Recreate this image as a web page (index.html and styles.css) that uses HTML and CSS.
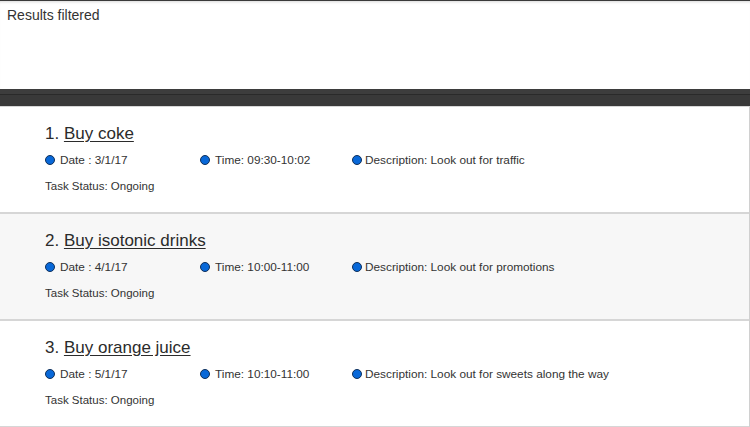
FILE: index.html
```html
<!DOCTYPE html>
<html>
<head>
<meta charset="utf-8">
<link rel="stylesheet" href="styles.css">
</head>
<body>
<div class="status">Results filtered</div>
<div class="toolbar"><div class="toolbar-top"></div></div>
<div class="list">
  <div class="card">
    <div class="title">1. <span class="name">Buy coke</span></div>
    <div class="details">
      <div class="item"><span class="dot"></span><span>Date : 3/1/17</span></div>
      <div class="item"><span class="dot"></span><span>Time: 09:30-10:02</span></div>
      <div class="item desc"><span class="dot"></span><span>Description: Look out for traffic</span></div>
    </div>
    <div class="task">Task Status: Ongoing</div>
  </div>
  <div class="card alt">
    <div class="title">2. <span class="name">Buy isotonic drinks</span></div>
    <div class="details">
      <div class="item"><span class="dot"></span><span>Date : 4/1/17</span></div>
      <div class="item"><span class="dot"></span><span>Time: 10:00-11:00</span></div>
      <div class="item desc"><span class="dot"></span><span>Description: Look out for promotions</span></div>
    </div>
    <div class="task">Task Status: Ongoing</div>
  </div>
  <div class="card">
    <div class="title">3. <span class="name">Buy orange juice</span></div>
    <div class="details">
      <div class="item"><span class="dot"></span><span>Date : 5/1/17</span></div>
      <div class="item"><span class="dot"></span><span>Time: 10:10-11:00</span></div>
      <div class="item desc"><span class="dot"></span><span>Description: Look out for sweets along the way</span></div>
    </div>
    <div class="task">Task Status: Ongoing</div>
  </div>
</div>
</body>
</html>
```
FILE: styles.css
```css
html, body {
  margin: 0;
  padding: 0;
  background: #ffffff;
  font-family: "Liberation Sans", Arial, sans-serif;
  color: #333333;
  height: 427px;
  overflow: hidden;
}
.status {
  border-top: 1px solid #3a3a3a;
  box-shadow: inset 0 3px 3px -2px #d8d8d8;
  padding: 6px 0 0 7px;
  box-sizing: border-box;
  height: 89px;
  font-size: 14px;
  line-height: 17px;
  color: #333333;
}
.toolbar {
  height: 17px;
  background: #393939;
  border-bottom: 1px solid #d6d6d6;
}
.toolbar-top {
  height: 5px;
  border-bottom: 1px solid #2a2a2a;
  background: #3d3d3d;
}
.list {
  border-right: 1px solid #d0d0d0;
}
.card {
  border-bottom: 2px solid #d6d6d6;
  padding: 16px 0 0 45px;
  box-sizing: content-box;
  height: 89px;
  background: #ffffff;
}
.card.alt {
  background: #f7f7f7;
}
.title {
  font-size: 17px;
  line-height: 21px;
  color: #2b2b2b;
}
.name {
  text-decoration: underline;
  text-underline-offset: 2px;
}
.details {
  display: grid;
  grid-template-columns: 155px 152px auto;
  margin-top: 9px;
  font-size: 11.8px;
  line-height: 14px;
}
.item {
  display: flex;
  align-items: center;
  gap: 5px;
}
.item.desc {
  gap: 3px;
}
.dot {
  width: 8px;
  height: 8px;
  border-radius: 50%;
  background: #0868d8;
  border: 1px solid #10305a;
  flex: none;
}
.task {
  margin-top: 12px;
  font-size: 11.5px;
  line-height: 14px;
}
```
